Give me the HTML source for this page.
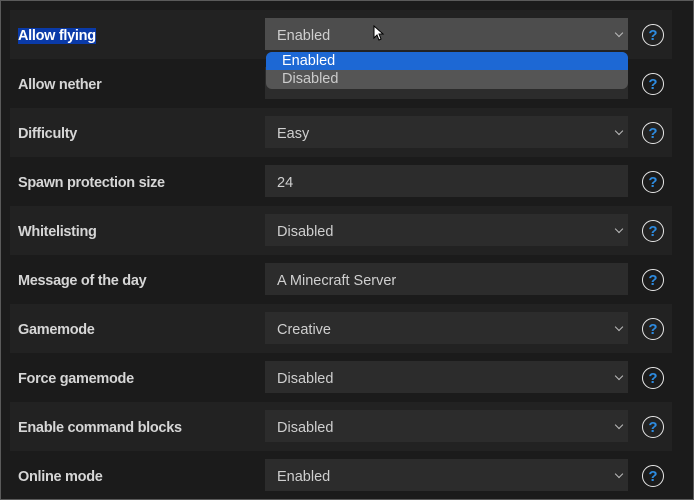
<!DOCTYPE html>
<html><head><style>
body{margin:0;width:694px;height:500px;background:#1b1b1b;font-family:"Liberation Sans",sans-serif;overflow:hidden;position:relative}
.frame{position:absolute;left:0;top:0;width:692px;height:498px;border:1px solid #5a5a5a}
.row{position:absolute;left:10px;width:662px;height:49px}
.row.alt{background:#222}
.lbl{position:absolute;left:8px;top:18px;color:#d6d6d6;font-size:14.5px;font-weight:bold;letter-spacing:-0.3px}
.sel{position:absolute;left:255px;top:8px;width:363px;height:32px;background:#2c2c2c;color:#cfcfcf;font-size:14.5px;line-height:36px;box-sizing:border-box;padding-left:12px}
.chev{position:absolute;right:6px;top:12px;width:5px;height:5px;border-right:1.5px solid #bbb;border-bottom:1.5px solid #bbb;transform:rotate(45deg)}
.help{position:absolute;left:632px;top:14px;width:20px;height:20px;border:1.5px solid #e8e8e8;border-radius:50%;color:#2d8be0;font-weight:bold;font-size:15px;display:flex;align-items:center;justify-content:center;line-height:1;padding-top:1px;box-sizing:content-box;height:19px}
</style></head><body>
<div class="frame"></div>
<div class="row alt" style="top:10px"><div class="lbl"><span style="background:#0a3aa8;color:#fff">Allow flying</span></div><div class="sel" style="background:#4d4d4d">Enabled<div class="chev"></div></div><div class="help">?</div></div>
<div class="row" style="top:59px"><div class="lbl">Allow nether</div><div class="sel"></div><div class="help">?</div></div>
<div class="row alt" style="top:108px"><div class="lbl">Difficulty</div><div class="sel">Easy<div class="chev"></div></div><div class="help">?</div></div>
<div class="row" style="top:157px"><div class="lbl">Spawn protection size</div><div class="sel">24</div><div class="help">?</div></div>
<div class="row alt" style="top:206px"><div class="lbl">Whitelisting</div><div class="sel">Disabled<div class="chev"></div></div><div class="help">?</div></div>
<div class="row" style="top:255px"><div class="lbl">Message of the day</div><div class="sel">A Minecraft Server</div><div class="help">?</div></div>
<div class="row alt" style="top:304px"><div class="lbl">Gamemode</div><div class="sel">Creative<div class="chev"></div></div><div class="help">?</div></div>
<div class="row" style="top:353px"><div class="lbl">Force gamemode</div><div class="sel">Disabled<div class="chev"></div></div><div class="help">?</div></div>
<div class="row alt" style="top:402px"><div class="lbl">Enable command blocks</div><div class="sel">Disabled<div class="chev"></div></div><div class="help">?</div></div>
<div class="row" style="top:451px"><div class="lbl">Online mode</div><div class="sel">Enabled<div class="chev"></div></div><div class="help">?</div></div>
<div style="position:absolute;left:266px;top:52px;width:362px;height:37px;background:#555;border-radius:6px;overflow:hidden;font-size:14.5px;color:#ccc">
<div style="background:#1d68d4;color:#fff;height:18px;line-height:19px;padding-left:16px">Enabled</div>
<div style="height:18px;line-height:19px;padding-left:16px">Disabled</div></div>
<svg style="position:absolute;left:373px;top:25px" width="12" height="17" viewBox="0 0 12 17"><path d="M1 1 L1 13 L4 10 L6 15 L8 14 L6 9 L10 9 Z" fill="#fff" stroke="#000" stroke-width="1"/></svg>
</body></html>
